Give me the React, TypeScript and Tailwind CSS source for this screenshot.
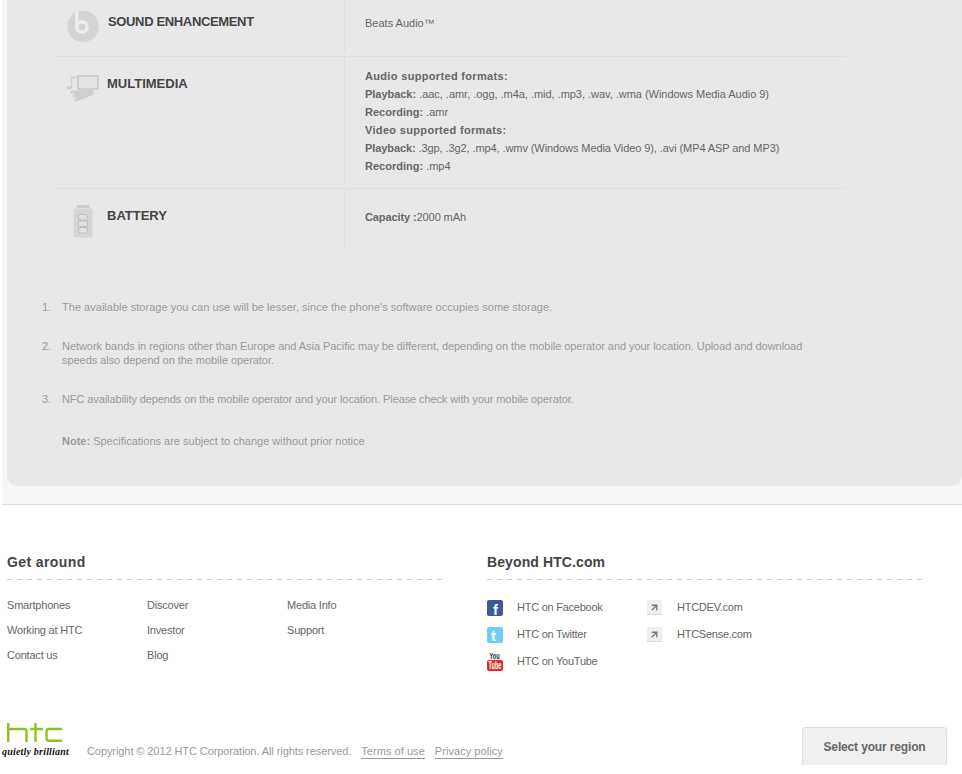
import { ArrowUpRight } from "lucide-react";

function BeatsIcon() {
  return (
    <svg width="32" height="33" viewBox="0 0 32 33">
      <circle cx="16" cy="16.5" r="15.7" fill="#d5d5d5" />
      <circle cx="15" cy="17" r="5.2" fill="none" stroke="#eeeeee" strokeWidth="3.2" />
      <rect x="8.2" y="2" width="3.2" height="15" fill="#eeeeee" />
    </svg>
  );
}

function MediaIcon() {
  return (
    <svg width="33" height="28" viewBox="0 0 33 28">
      <path d="M5.5 13 V2.5 H11" fill="none" stroke="#cfcfcf" strokeWidth="1.4" />
      <ellipse cx="3" cy="12.8" rx="2.8" ry="1.6" fill="#cfcfcf" />
      <rect x="12" y="1" width="20" height="13" rx="0.5" fill="#e4e4e4" stroke="#cfcfcf" strokeWidth="2" />
      <path d="M4 16 L27 14 L28 19.5 L9 27 Z" fill="#cfcfcf" />
      <path d="M6.5 18 L9.5 25.5" stroke="#ececec" strokeWidth="2.2" strokeDasharray="1.5 1" />
    </svg>
  );
}

function BatteryIcon() {
  return (
    <svg width="20" height="33" viewBox="0 0 20 33">
      <rect x="3.5" y="0" width="13" height="4" rx="1" fill="#cdcdcd" />
      <rect x="0.5" y="3.5" width="19" height="29" rx="2" fill="#d6d6d6" stroke="#dfdfdf" />
      <rect x="5.5" y="9.5" width="9" height="5.5" rx="1.5" fill="#e2e2e2" stroke="#bdbdbd" />
      <rect x="5.5" y="16" width="9" height="5.5" rx="1.5" fill="#e2e2e2" stroke="#bdbdbd" />
      <rect x="5.5" y="22.5" width="9" height="5.5" rx="1.5" fill="#e2e2e2" stroke="#bdbdbd" />
    </svg>
  );
}

function Spec({ icon, title, titleClass, rowH, lineH, titleLeft, titleTop, iconLeft, iconTop, children, last }: any) {
  return (
    <div className={last ? "flex" : "flex border-b border-[#dedede]"}>
      <div className="flex w-[290px] shrink-0" style={{ height: rowH }}>
        <div className="flex w-[289px] border-r border-[#dedede]" style={{ height: lineH }}>
          <div className="flex shrink-0" style={{ paddingLeft: iconLeft, paddingTop: iconTop, width: titleLeft }}>{icon}</div>
          <h3 className={"text-[13px] leading-[16px] font-bold text-[#444] " + (titleClass || "")} style={{ paddingTop: titleTop }}>{title}</h3>
        </div>
      </div>
      <div className="pl-[19px] pr-2" style={{ paddingTop: rowH > 100 ? 10 : last ? 19 : 14 }}>{children}</div>
    </div>
  );
}

const b = "font-bold";

function SocialFb() {
  return (
    <svg width="16" height="16" viewBox="0 0 16 16" className="overflow-visible">
      <rect width="16" height="16" rx="2" fill="#3b5a9a" />
      <text x="6" y="15" fontSize="15" fontWeight="bold" fill="#fff" fontFamily="Liberation Sans">f</text>
    </svg>
  );
}
function SocialTw() {
  return (
    <svg width="16" height="16" viewBox="0 0 16 16" className="overflow-visible">
      <rect width="16" height="16" rx="2" fill="#6fcdf3" />
      <text x="4" y="14" fontSize="15" fontWeight="bold" fill="#fff" fontFamily="Liberation Sans">t</text>
    </svg>
  );
}
function SocialYt() {
  return (
    <svg width="16" height="20" viewBox="0 0 16 20" className="overflow-visible">
      <text x="2.5" y="7" fontSize="9" fontWeight="bold" fill="#222" fontFamily="Liberation Sans" textLength="10" lengthAdjust="spacingAndGlyphs">You</text>
      <rect x="0" y="8" width="16" height="11" rx="2" fill="#d9302c" />
      <text x="1.5" y="17" fontSize="10" fontWeight="bold" fill="#fff" fontFamily="Liberation Sans" textLength="13" lengthAdjust="spacingAndGlyphs">Tube</text>
    </svg>
  );
}
function Ext() {
  return (
    <span className="flex h-[15px] w-[15px] items-center justify-center border-b border-[#d8d8d8] bg-[#efefef]">
      <ArrowUpRight size={11} strokeWidth={3} color="#777" />
    </span>
  );
}

function FooterLink({ children, h = 25 }: any) {
  return <a className="block text-[11px] tracking-[-0.2px] text-[#666]" style={{ height: h, lineHeight: h + "px" }}>{children}</a>;
}

function SocialRow({ icon, label, width = 160 }: any) {
  return (
    <div className="flex h-[27px] items-center" style={{ width }}>
      <span className="flex w-[30px] shrink-0 items-center">{icon}</span>
      <span className="text-[11px] tracking-[-0.25px] text-[#666]">{label}</span>
    </div>
  );
}

function Dashes() {
  return <div className="h-px bg-[repeating-linear-gradient(90deg,#cccccc_0,#cccccc_5px,transparent_5px,transparent_10px)]" />;
}

export default function App() {
  return (
    <div className="h-[774px] w-[962px] overflow-hidden bg-white font-['Liberation_Sans',Arial,sans-serif]">
      <div className="ml-[2px] h-[505px] border-b border-[#dedede] bg-[#f7f7f7] pl-[5px]">
        <div className="h-[486px] rounded-b-[10px] bg-[#e8e8e8]">
          <div className="ml-[49px] w-[789px] text-[11px] leading-[18px] text-[#666]">
            <Spec icon={<BeatsIcon />} title="SOUND ENHANCEMENT" titleClass="tracking-[-0.35px]" rowH={56} lineH={52} titleLeft={52} iconLeft={11} iconTop={10} titleTop={14}>
              Beats Audio™
            </Spec>
            <Spec icon={<MediaIcon />} title="MULTIMEDIA" rowH={131} lineH={127} titleLeft={51} iconLeft={10} iconTop={18} titleTop={19}>
              <p><span className={b + " tracking-[0.33px]"}>Audio supported formats:</span></p>
              <p className="tracking-[-0.03px]"><span className={b}>Playback:</span> .aac, .amr, .ogg, .m4a, .mid, .mp3, .wav, .wma (Windows Media Audio 9)</p>
              <p><span className={b}>Recording:</span> .amr</p>
              <p><span className={b + " tracking-[0.33px]"}>Video supported formats:</span></p>
              <p className="tracking-[-0.09px]"><span className={b}>Playback:</span> .3gp, .3g2, .mp4, .wmv (Windows Media Video 9), .avi (MP4 ASP and MP3)</p>
              <p><span className={b}>Recording:</span> .mp4</p>
            </Spec>
            <Spec last icon={<BatteryIcon />} title="BATTERY" rowH={58} lineH={58} titleLeft={51} iconLeft={17} iconTop={16} titleTop={19}>
              <span className={"tracking-[-0.1px] " + b}>Capacity :</span><span className="tracking-[-0.1px]">2000 mAh</span>
            </Spec>
          </div>

          <ol className="mt-[53px] w-[800px] pl-[35px] text-[11px] leading-[14px] text-[#999]">
            <li className="flex"><span className="w-[20px] shrink-0">1.</span><span className="flex-1 tracking-[0.02px]">The available storage you can use will be lesser, since the phone's software occupies some storage.</span></li>
            <li className="mt-[25px] flex"><span className="w-[20px] shrink-0">2.</span><span className="flex-1 tracking-[-0.05px]">Network bands in regions other than Europe and Asia Pacific may be different, depending on the mobile operator and your location. Upload and download speeds also depend on the mobile operator.</span></li>
            <li className="mt-[25px] flex"><span className="w-[20px] shrink-0">3.</span><span className="flex-1 tracking-[-0.1px]">NFC availability depends on the mobile operator and your location. Please check with your mobile operator.</span></li>
          </ol>
          <p className="mt-[28px] pl-[55px] text-[11px] leading-[14px] text-[#999]"><span className="font-bold">Note:</span> Specifications are subject to change without prior notice</p>
        </div>
      </div>

      <div className="flex pl-[7px] pt-[49px]">
        <div className="w-[480px]">
          <h4 className="h-[25px] w-[435px] text-[14px] leading-[17px] font-bold tracking-[0.4px] text-[#444]">Get around</h4>
          <div className="w-[435px]"><Dashes /></div>
          <div className="mt-[13px] flex">
            <div className="w-[140px]">
              <FooterLink>Smartphones</FooterLink>
              <FooterLink>Working at HTC</FooterLink>
              <FooterLink>Contact us</FooterLink>
            </div>
            <div className="w-[140px]">
              <FooterLink>Discover</FooterLink>
              <FooterLink>Investor</FooterLink>
              <FooterLink>Blog</FooterLink>
            </div>
            <div className="w-[140px]">
              <FooterLink>Media Info</FooterLink>
              <FooterLink>Support</FooterLink>
            </div>
          </div>
        </div>
        <div className="w-[435px]">
          <h4 className="h-[25px] text-[14px] leading-[17px] font-bold tracking-[0.1px] text-[#444]">Beyond HTC.com</h4>
          <Dashes />
          <div className="mt-[14px] flex">
            <div>
              <SocialRow icon={<SocialFb />} label="HTC on Facebook" />
              <SocialRow icon={<SocialTw />} label="HTC on Twitter" />
              <SocialRow icon={<SocialYt />} label="HTC on YouTube" />
            </div>
            <div>
              <SocialRow icon={<Ext />} label="HTCDEV.com" />
              <SocialRow icon={<Ext />} label="HTCSense.com" />
            </div>
          </div>
        </div>
      </div>

      <div className="mt-[45px] flex h-[45px] items-end pl-[2px] pr-[15px]">
        <div className="mb-[6px] flex w-[85px] shrink-0 flex-col">
          <svg width="56" height="19" viewBox="0 0 56 19" className="ml-[5px]">
            <path d="M1.2 0 V19 M1.2 6 H17 Q19.5 6 19.5 8.5 V19 M23 6 H36 M28.5 0 V19 M55 6 H42 Q39.5 6 39.5 8.5 V15 Q39.5 17.8 42 17.8 H55" fill="none" stroke="#8dc21f" strokeWidth="2.4" />
          </svg>
          <span className="mt-[2px] font-['Liberation_Serif',serif] text-[10px] leading-[15px] font-bold tracking-[0.2px] text-[#111] italic">quietly brilliant</span>
        </div>
        <p className="mb-[6px] flex text-[11px] leading-[14px] text-[#999]">
          <span className="tracking-[-0.08px]">Copyright © 2012 HTC Corporation. All rights reserved.</span>
          <a className="ml-[10px] border-b border-[#999] tracking-[0.05px]">Terms of use</a>
          <a className="ml-[10px] border-b border-[#999] tracking-[0.05px]">Privacy policy</a>
        </p>
        <button className="ml-auto h-[38px] w-[145px] rounded-t-[4px] border-x border-t border-[#dddddd] bg-[#f0f0f0] text-[12px] font-bold tracking-[-0.15px] text-[#666]">Select your region</button>
      </div>
    </div>
  );
}
